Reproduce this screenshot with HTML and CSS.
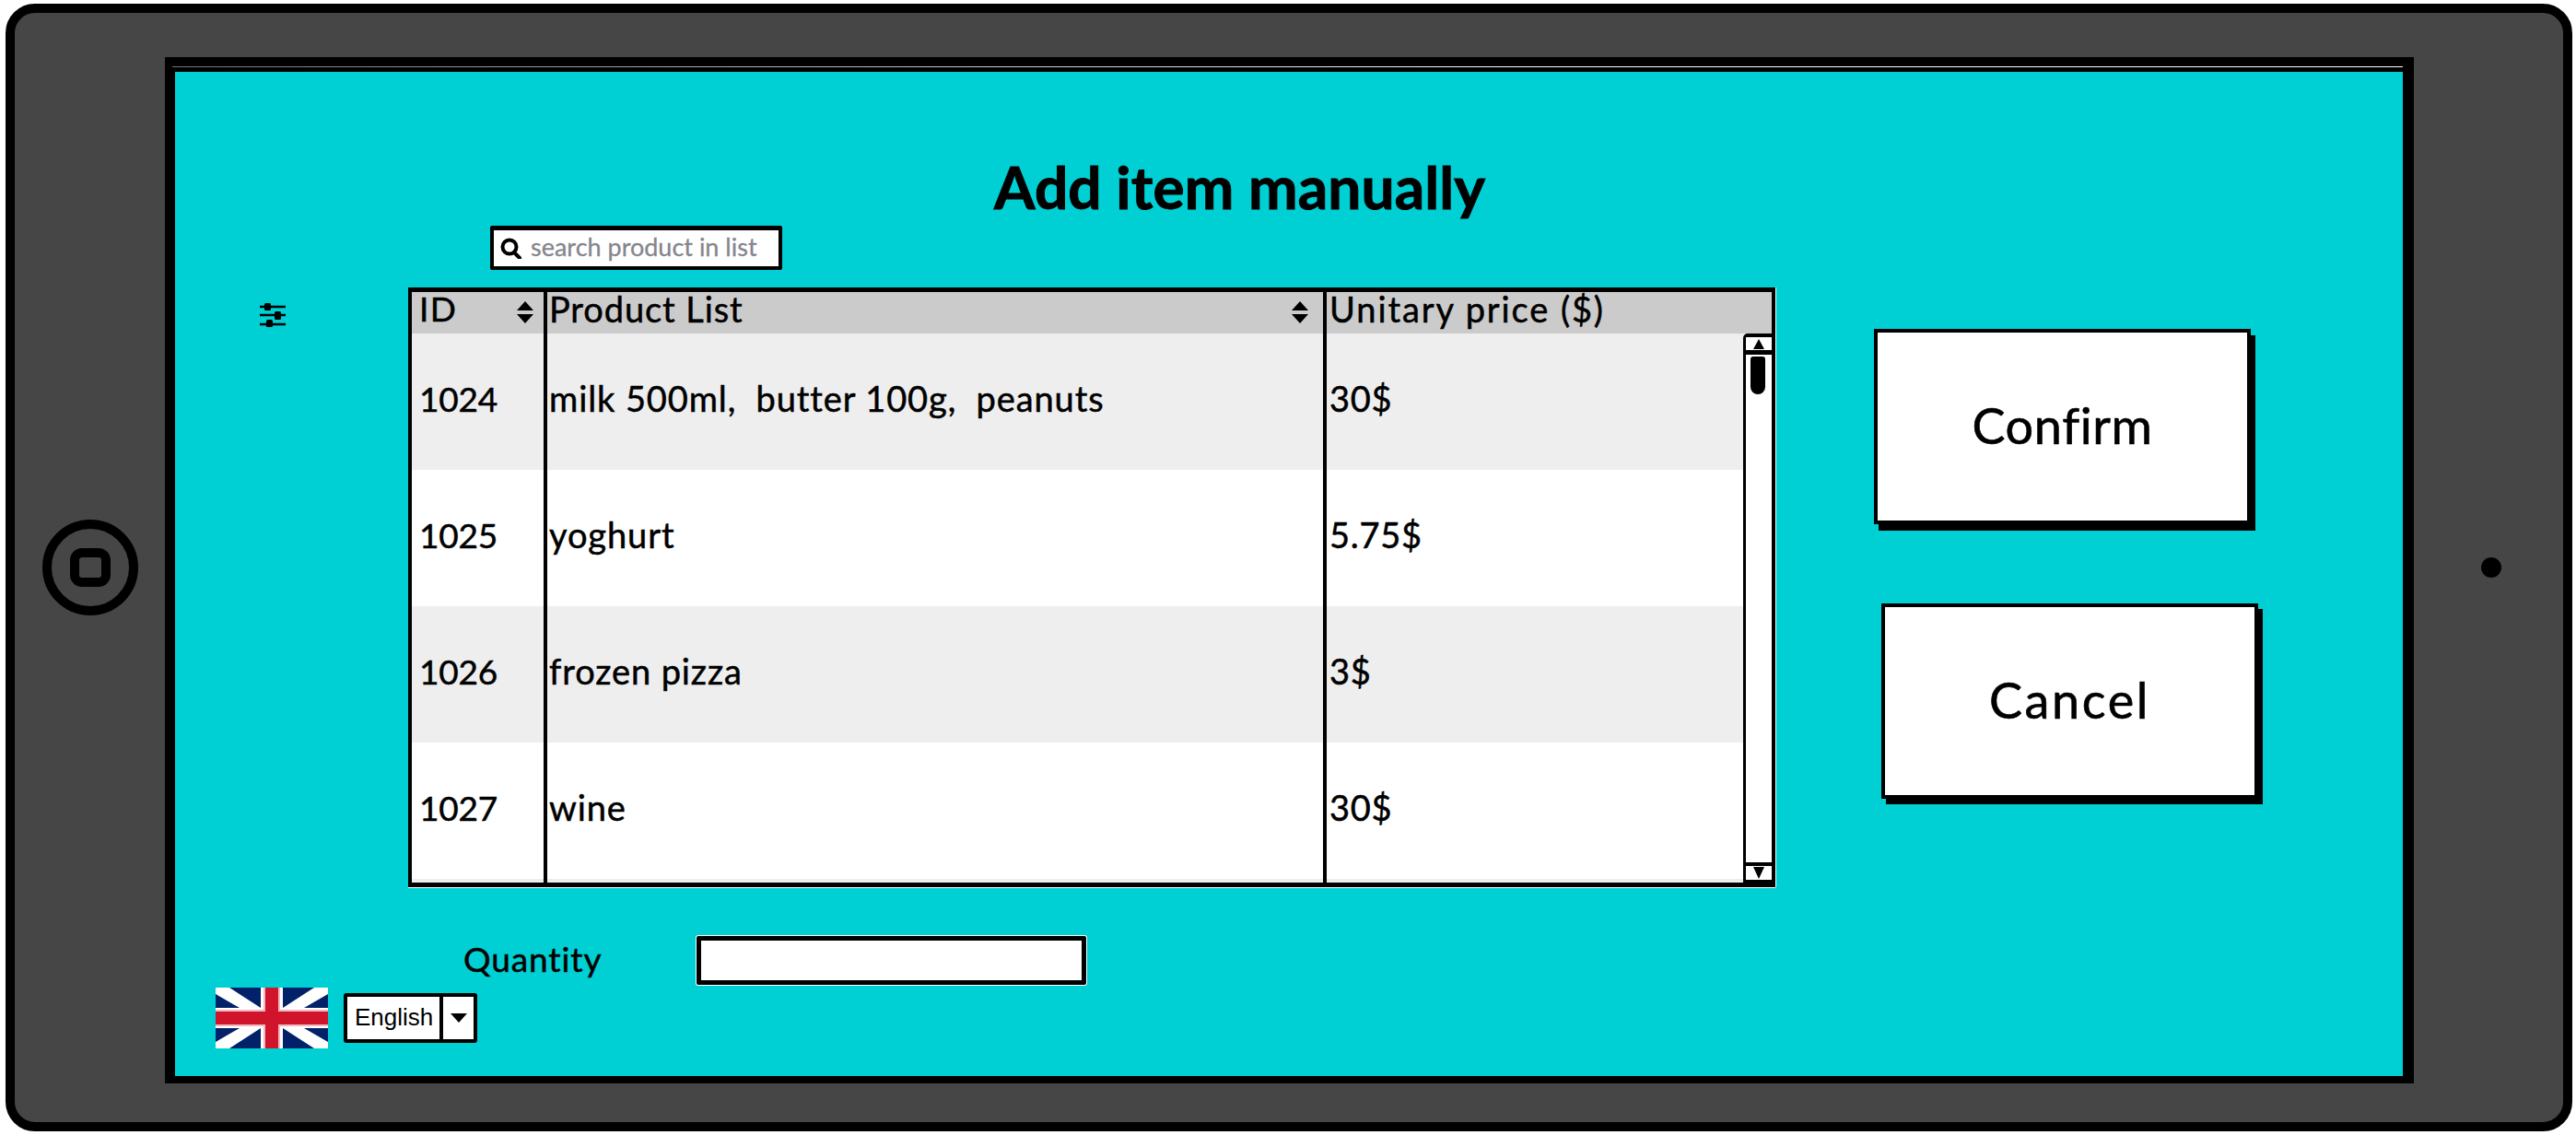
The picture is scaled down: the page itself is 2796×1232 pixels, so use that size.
FILE: index.html

```html
<!DOCTYPE html>
<html lang="en">
<head>
<meta charset="UTF-8">
<title>Add item manually</title>
<link rel="stylesheet" href="styles.css">
</head>
<body>
<div class="device">
  <div class="bezel-left">
    <svg class="home" width="104" height="104" viewBox="0 0 104 104">
      <circle cx="52" cy="52" r="47" fill="none" stroke="#000" stroke-width="10"/>
      <rect x="35" y="36" width="34" height="32" rx="8" fill="none" stroke="#000" stroke-width="10"/>
    </svg>
  </div>

  <div class="screen">
    <h1 class="title">Add item manually</h1>

    <div class="search">
      <svg width="24" height="23" viewBox="0 0 24 23">
        <circle cx="10" cy="10" r="7.5" fill="none" stroke="#000" stroke-width="4"/>
        <path d="M15 16l6 6" stroke="#000" stroke-width="4" stroke-linecap="round"/>
      </svg>
      <span>search product in list</span>
    </div>

    <div class="workspace">
      <div class="filter-col">
        <svg width="28" height="26" viewBox="0 0 28 26">
          <path d="M0 4h28M0 13h28M0 23h28" stroke="#000" stroke-width="2.5"/>
          <rect x="5" y="0" width="7" height="8" rx="1.5"/>
          <rect x="16" y="9" width="7" height="9" rx="1.5"/>
          <rect x="7" y="18" width="7" height="8" rx="1.5"/>
        </svg>
      </div>

      <div class="table">
        <div class="row head">
          <div class="cell c-id"><span>ID</span>
            <svg width="18" height="24" viewBox="0 0 18 24"><path d="M9 0l9 10H0zM0 14h18l-9 10z"/></svg>
          </div>
          <div class="cell c-name"><span>Product List</span>
            <svg width="18" height="24" viewBox="0 0 18 24"><path d="M9 0l9 10H0zM0 14h18l-9 10z"/></svg>
          </div>
          <div class="cell c-price"><span>Unitary price ($)</span></div>
        </div>
        <div class="row shade">
          <div class="cell c-id"><span>1024</span></div>
          <div class="cell c-name"><span>milk 500ml,  butter 100g,  peanuts</span></div>
          <div class="cell c-price"><span>30$</span></div>
        </div>
        <div class="row">
          <div class="cell c-id"><span>1025</span></div>
          <div class="cell c-name"><span>yoghurt</span></div>
          <div class="cell c-price"><span>5.75$</span></div>
        </div>
        <div class="row shade">
          <div class="cell c-id"><span>1026</span></div>
          <div class="cell c-name"><span>frozen pizza</span></div>
          <div class="cell c-price"><span>3$</span></div>
        </div>
        <div class="row">
          <div class="cell c-id"><span>1027</span></div>
          <div class="cell c-name"><span>wine</span></div>
          <div class="cell c-price"><span>30$</span></div>
        </div>
        <div class="row shade">
          <div class="cell c-id"></div>
          <div class="cell c-name"></div>
          <div class="cell c-price"></div>
        </div>

        <div class="scrollbar">
          <div class="sb-btn sb-up"><svg width="12" height="11" viewBox="0 0 12 11"><path d="M6 0l6 11H0z"/></svg></div>
          <div class="sb-track"><div class="sb-thumb"></div></div>
          <div class="sb-btn sb-down"><svg width="12" height="13" viewBox="0 0 12 13"><path d="M0 0h12L6 13z"/></svg></div>
        </div>
      </div>

      <div class="actions">
        <button class="btn">Confirm</button>
        <button class="btn btn-cancel">Cancel</button>
      </div>
    </div>

    <div class="quantity">
      <label for="qty">Quantity</label>
      <input id="qty" type="text">
    </div>

    <div class="language">
      <svg class="flag" width="122" height="66" viewBox="0 0 122 66">
        <rect width="122" height="66" fill="#fff"/>
        <path fill="#012169" d="M15 0h34v22zM107 0H73v22zM0 7l26 15H0zM122 7L96 22h26zM0 44h26L0 59zM122 44H96l26 15zM49 44v22H15zM73 44v22h34z"/>
        <path fill="#f0b8c0" d="M52 0h18v24h52v18H70v24H52V42H0V24h52z"/>
        <path fill="#cf142b" d="M54 0h14v26h54v14H68v26H54V40H0V26h54z"/>
      </svg>
      <div class="lang-select">
        <span class="lang-text">English</span>
        <span class="lang-arrow"><svg width="18" height="10" viewBox="0 0 18 10"><path d="M0 0h18L9 10z"/></svg></span>
      </div>
    </div>
  </div>

  <div class="bezel-right"><div class="dot"></div></div>
</div>
</body>
</html>
```

FILE: styles.css

```css
html,body{margin:0;padding:0;background:#fff}
body{width:2796px;height:1232px;overflow:hidden;font-family:Lato,"Open Sans",sans-serif;color:#000}

.device{box-sizing:border-box;width:2786px;height:1224px;margin:4px 0 0 6px;border:10px solid #000;border-radius:32px;background:#464646;display:flex}
.bezel-left{width:163px;height:1204px;display:flex;align-items:center;justify-content:center}
.bezel-right{flex:1;height:1204px;display:flex;align-items:center;justify-content:center;padding-left:6px}
.dot{width:22px;height:22px;border-radius:50%;background:#000}

.screen{position:relative;box-sizing:border-box;width:2441px;height:1114px;margin-top:48px;border:solid #000;border-width:16px 12px 8px 11px;background:#00cfd4}
/* thin light line in the top edge of the screen */
.screen::before{content:"";position:absolute;left:-3px;right:0;top:-6px;height:1px;background:linear-gradient(90deg,#777,#fff 60%)}

.title{margin:0 0 0 889px;padding-top:93px;height:74px;font-size:64px;line-height:64px;font-weight:700;letter-spacing:.1px;-webkit-text-stroke:1px #000;white-space:nowrap;box-sizing:content-box}
.search{box-sizing:border-box;width:317px;height:48px;margin-left:342px;border:4px solid #000;border-top-width:5px;border-radius:2px;background:#fff;display:flex;align-items:center;gap:9px;padding:0 0 5px 7px;color:#85858f;font-size:27px;-webkit-text-stroke:.3px #85858f}
.search svg{flex:none;margin-top:5px}

.workspace{display:flex;align-items:flex-start;margin-top:19px}
.filter-col{width:253px;box-sizing:border-box;padding:17px 0 0 92px}
.filter-col svg{display:block}

.table{position:relative;box-sizing:border-box;width:1484px;height:651px;border:solid #000;border-width:5px 4px;background:#fff;overflow:hidden;box-shadow:0 1px 0 #fff,1px 0 0 #fff}
.row{display:grid;grid-template-columns:147px 846px 1fr;height:148px;font-size:38px;-webkit-text-stroke:.5px #000}
.row.shade{background:#eee}
.row.head{height:45px;background:#cbcbcb;letter-spacing:1.4px;line-height:30px}
.cell{box-sizing:border-box;display:flex;align-items:center;justify-content:space-between;border-right:4px solid #000;padding-bottom:8px}
.cell span{white-space:pre}
.cell svg{flex:none}
.head .cell{padding-bottom:10px}
.head .cell svg{margin-top:9px}
.c-id{padding-left:8px;padding-right:11px;font-size:37px}
.row:not(.head) .c-id{letter-spacing:-.2px}
.c-name{padding-left:2px;padding-right:16px;letter-spacing:.9px}
.c-price{padding-left:3px;border-right:0;letter-spacing:.7px}
.head .c-price{letter-spacing:1.9px}

.scrollbar{position:absolute;right:0;top:45px;bottom:0;width:31px;box-sizing:border-box;background:#fff;border:solid #000;border-width:4px 0 3px 3px;border-radius:5px 0 0 0;display:flex;flex-direction:column}
.sb-btn{display:flex;justify-content:center;align-items:center;background:#fff}
.sb-btn svg{display:block}
.sb-up{height:14px;border-bottom:5px solid #000}
.sb-down{height:15px;border-top:4px solid #000}
.sb-track{flex:1;padding-top:2px}
.sb-thumb{width:16px;height:41px;margin-left:5px;background:#000;border-radius:3px 3px 8px 8px}

.actions{margin-left:107px;padding-top:45px}
.btn{display:block;box-sizing:border-box;width:409px;height:212px;border:4px solid #000;border-radius:0;background:#fff;box-shadow:5px 7px 0 #000;font-family:inherit;font-size:54px;letter-spacing:.6px;-webkit-text-stroke:.6px #000;color:#000;padding:0 0 4px}
.btn-cancel{margin:86px 0 0 8px;box-shadow:5px 6px 0 #000;letter-spacing:2.6px}

.quantity{display:flex;align-items:center;margin:53px 0 0 313px}
.quantity label{width:253px;font-size:37px;letter-spacing:.9px;-webkit-text-stroke:.5px #000;padding-bottom:5px}
.quantity input{box-sizing:border-box;width:423px;height:53px;border:5px solid #000;border-radius:2px;background:#fff;padding:0;box-shadow:0 0 0 1px #fff}

.language{display:flex;align-items:center;margin:3px 0 0 44px}
.flag{display:block}
.lang-select{box-sizing:border-box;width:145px;height:54px;margin-left:17px;border:4px solid #000;border-radius:3px;background:#fff;display:flex;align-items:center;font-family:"Liberation Sans",sans-serif;font-size:26px}
.lang-text{width:104px;box-sizing:border-box;padding:0 0 2px 8px;line-height:44px;border-right:4px solid #000}
.lang-arrow{flex:1;display:flex;justify-content:center}
.lang-arrow svg{display:block}
```
